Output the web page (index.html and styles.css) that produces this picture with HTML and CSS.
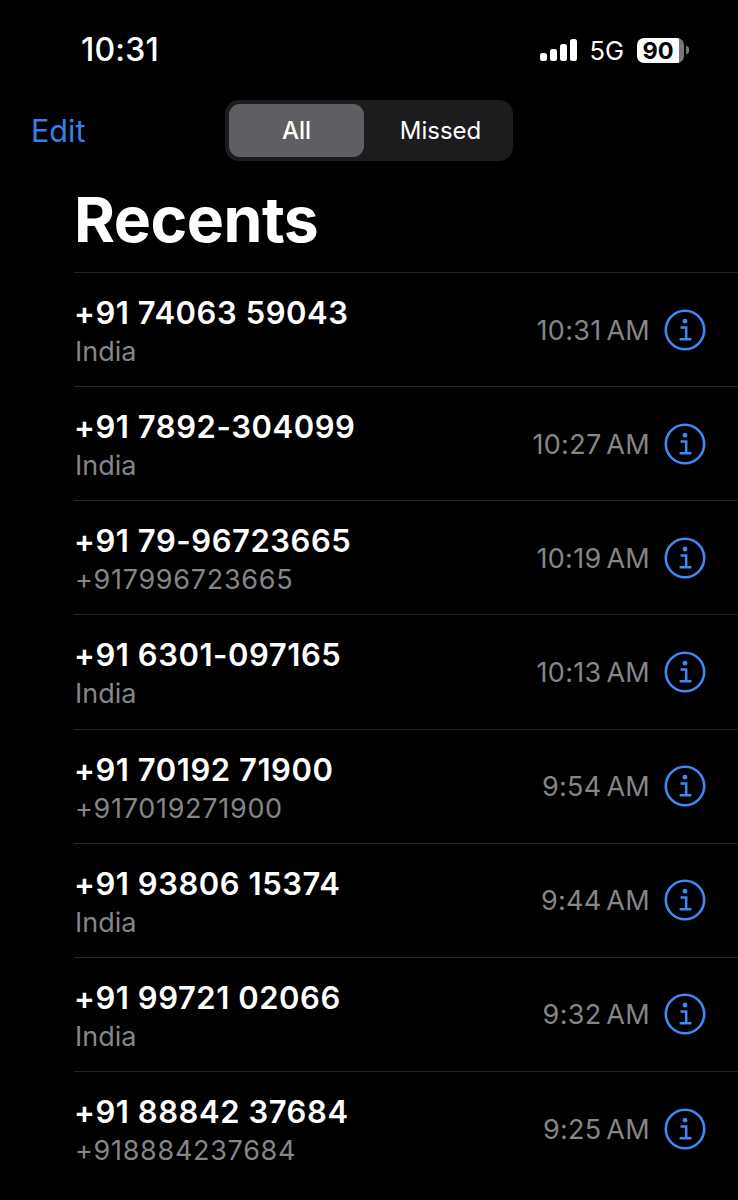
FILE: index.html
```html
<!DOCTYPE html>
<html lang="en">
<head>
<meta charset="utf-8">
<title>Recents</title>
<link rel="stylesheet" href="styles.css">
</head>
<body>
<div class="screen">
  <header class="status">
    <span class="clock">10:31</span>
    <div class="indicators">
      <svg class="signal" width="38" height="24" viewBox="0 0 38 24"><rect x="0" y="15" width="7" height="8" rx="2.5"/><rect x="10" y="11" width="7" height="12" rx="2.5"/><rect x="20" y="6" width="7" height="17" rx="2.5"/><rect x="30" y="1" width="7" height="22" rx="2.5"/></svg>
      <span class="network">5G</span>
      <div class="battery"><span class="battery-level">90</span></div>
      <span class="battery-cap"></span>
    </div>
  </header>
  <nav class="nav">
    <a class="edit">Edit</a>
    <div class="segments">
      <span class="segment active">All</span>
      <span class="segment">Missed</span>
    </div>
  </nav>
  <h1 class="title">Recents</h1>
  <ul class="list">
    <li class="row"><div class="who"><div class="number">+91 74063 59043</div><div class="sub">India</div></div><span class="time">10:31 AM</span><svg class="info" viewBox="0 0 42 42"><use href="#i"/></svg></li>
    <li class="row"><div class="who"><div class="number">+91 7892-304099</div><div class="sub">India</div></div><span class="time">10:27 AM</span><svg class="info" viewBox="0 0 42 42"><use href="#i"/></svg></li>
    <li class="row"><div class="who"><div class="number">+91 79-96723665</div><div class="sub digits">+917996723665</div></div><span class="time">10:19 AM</span><svg class="info" viewBox="0 0 42 42"><use href="#i"/></svg></li>
    <li class="row"><div class="who"><div class="number">+91 6301-097165</div><div class="sub">India</div></div><span class="time">10:13 AM</span><svg class="info" viewBox="0 0 42 42"><use href="#i"/></svg></li>
    <li class="row"><div class="who"><div class="number">+91 70192 71900</div><div class="sub digits">+917019271900</div></div><span class="time">9:54 AM</span><svg class="info" viewBox="0 0 42 42"><use href="#i"/></svg></li>
    <li class="row"><div class="who"><div class="number">+91 93806 15374</div><div class="sub">India</div></div><span class="time">9:44 AM</span><svg class="info" viewBox="0 0 42 42"><use href="#i"/></svg></li>
    <li class="row"><div class="who"><div class="number">+91 99721 02066</div><div class="sub">India</div></div><span class="time">9:32 AM</span><svg class="info" viewBox="0 0 42 42"><use href="#i"/></svg></li>
    <li class="row"><div class="who"><div class="number">+91 88842 37684</div><div class="sub digits">+918884237684</div></div><span class="time">9:25 AM</span><svg class="info" viewBox="0 0 42 42"><use href="#i"/></svg></li>
  </ul>
</div>
<svg class="defs" width="0" height="0"><defs><g id="i"><circle cx="21" cy="21" r="19.2" fill="none" stroke="currentColor" stroke-width="2.6"/><circle cx="21" cy="12.2" r="2.4" fill="currentColor"/><path d="M16.5 18.6H22.2V29.8M15.6 30.3H27.4" fill="none" stroke="currentColor" stroke-width="2.5"/></g></defs></svg>
</body>
</html>
```
FILE: styles.css
```css
* { box-sizing: border-box; }
html, body { margin: 0; padding: 0; background: #000; }
body { font-family: Inter, "Liberation Sans", sans-serif; color: #fff; }
.screen { width: 738px; height: 1200px; overflow: hidden; background: #000; }
.defs { display: block; height: 0; }

.status { height: 100px; padding: 31px 49px 0 81px; display: flex; justify-content: space-between; align-items: flex-start; }
.clock { font-size: 32px; line-height: 38px; font-weight: 500; letter-spacing: 0.2px; }
.indicators { display: flex; align-items: center; height: 38px; }
.signal { fill: #fff; margin-right: 11px; }
.network { font-size: 25.5px; font-weight: 400; margin-right: 13px; }
.battery { width: 47px; height: 25px; border-radius: 7px; padding-right: 5px; display: flex; justify-content: center; background: linear-gradient(90deg, #fff 89%, #777 89%); }
.battery-level { color: #000; font-size: 23.5px; font-weight: 700; line-height: 25px; }
.battery-cap { width: 3px; height: 8px; margin-left: 2px; border-radius: 0 3px 3px 0; background: #777; }

.nav { height: 61px; display: flex; align-items: center; padding-left: 31px; }
.edit { width: 194px; color: #3a7fe8; font-size: 30.5px; font-weight: 400; }
.segments { width: 288px; height: 61px; padding: 4px; border-radius: 14px; background: #1c1c1e; display: flex; }
.segment { height: 53px; display: flex; align-items: center; justify-content: center; font-size: 24px; font-weight: 400; }
.segment.active { width: 135px; border-radius: 11px; background: #5f5f63; font-weight: 500; }
.segment:not(.active) { flex: 1; padding-left: 8px; }

.title { margin: 0; padding: 5px 0 0 74px; height: 111px; display: flex; align-items: center; font-size: 62.5px; font-weight: 700; letter-spacing: -0.5px; }

.list { list-style: none; margin: 0 0 0 74px; padding: 0; }
.row { height: 114.15px; border-top: 1px solid #262628; display: flex; align-items: center; padding-right: 32px; }
.who { flex: 1; padding: 7px 0 0 0; }
.number { font-size: 31px; line-height: 38px; font-weight: 600; letter-spacing: 0.55px; }
.sub { font-size: 27px; line-height: 40px; color: #85858a; padding-left: 1px; }
.sub.digits { letter-spacing: 0.7px; }
.time { font-size: 27px; color: #85858a; margin-right: 14px; letter-spacing: 0.3px; word-spacing: -3px; padding-top: 1px; }
.info { width: 42px; height: 42px; color: #3f88f5; flex: none; }
```
